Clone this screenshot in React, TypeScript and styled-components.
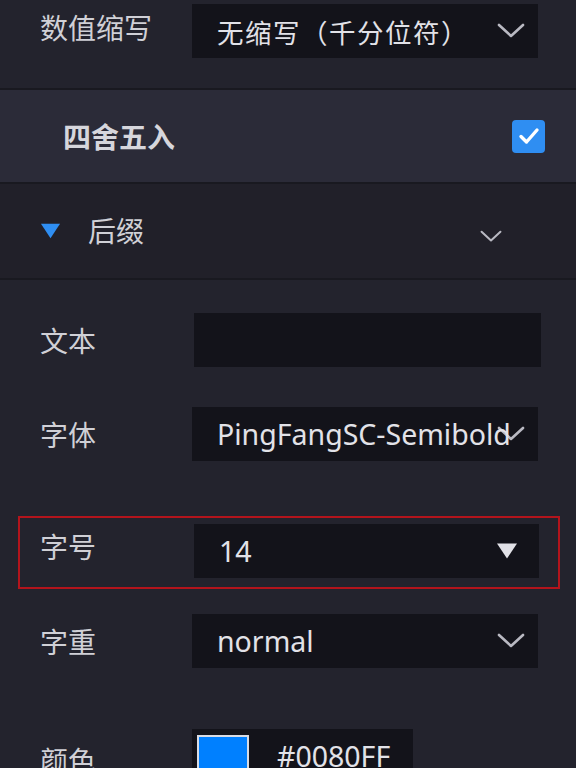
import React from "react";
import styled, { createGlobalStyle } from "styled-components";

const GlobalStyle = createGlobalStyle`
  html, body {
    margin: 0;
    padding: 0;
    background: #23232d;
  }
  body {
    font-family: "Noto Sans", "Noto Sans CJK SC", sans-serif;
  }
`;

const Panel = styled.div`
  width: 576px;
  height: 768px;
  overflow: hidden;
  background: #23232d;
  display: flex;
  flex-direction: column;
  & > * {
    flex-shrink: 0;
  }
`;

const TopSection = styled.div`
  padding: 4px 0 30px 0;
  border-bottom: 2px solid #191920;
`;

const Band = styled.div`
  height: 92px;
  background: #2b2b38;
  border-bottom: 2px solid #191920;
  display: flex;
  align-items: center;
  justify-content: space-between;
  padding: 0 31px 0 63px;
`;

const BandTitle = styled.span`
  font-family: "Noto Sans CJK SC", sans-serif;
  font-size: 28px;
  font-weight: 700;
  color: #d6d6dc;
`;

const Checkbox = styled.div`
  width: 33px;
  height: 33px;
  border-radius: 4px;
  background: #2f8ef2;
  display: flex;
  align-items: center;
  justify-content: center;
`;

const GroupHeader = styled.div`
  height: 94px;
  background: #212029;
  border-bottom: 2px solid #191920;
  display: flex;
  align-items: center;
  padding: 0 74px 0 40px;
`;

const GroupTitle = styled.span`
  font-family: "Noto Sans CJK SC", sans-serif;
  font-size: 28px;
  color: #d0d0d6;
  margin-left: 27px;
  flex: 1;
  margin-top: -2px;
`;

const HeaderArrow = styled.span`
  display: flex;
  margin-top: 10px;
`;

const Fields = styled.div`
  display: flex;
  flex-direction: column;
  padding-top: 33px;
`;

const FieldRow = styled.div<{ $top?: number; $boxed?: boolean }>`
  display: flex;
  align-items: center;
  margin-top: ${(p) => p.$top ?? 0}px;
  ${(p) =>
    p.$boxed
      ? `
    margin-left: 18px;
    margin-right: 16px;
    border: 2px solid #b3141c;
    padding: 6px 0 9px 20px;
  `
      : `padding-left: 40px;`}
`;

const Label = styled.span<{ $w?: number; $dy?: number }>`
  width: ${(p) => p.$w ?? 152}px;
  flex-shrink: 0;
  font-family: "Noto Sans CJK SC", sans-serif;
  font-size: 28px;
  color: #d0d0d6;
  position: relative;
  top: ${(p) => p.$dy ?? 0}px;
`;

const Select = styled.div<{ $w?: number }>`
  position: relative;
  width: ${(p) => p.$w ?? 346}px;
  height: 54px;
  background: #13131a;
  display: flex;
  align-items: center;
  padding-left: 25px;
  box-sizing: border-box;
`;

const Value = styled.span<{ $cjk?: boolean }>`
  position: relative;
  z-index: 1;
  font-family: ${(p) =>
    p.$cjk ? `"Noto Sans CJK SC", sans-serif` : `"Noto Sans", "Noto Sans CJK SC", sans-serif`};
  font-size: ${(p) => (p.$cjk ? 26.5 : 28.5)}px;
  letter-spacing: ${(p) => (p.$cjk ? 1.5 : 0)}px;
  color: #e2e2e8;
  white-space: nowrap;
`;

const ArrowSlot = styled.span<{ $right: number }>`
  position: absolute;
  right: ${(p) => p.$right}px;
  top: 50%;
  transform: translateY(-50%);
  display: flex;
`;

const ColorBox = styled.div`
  width: 221px;
  height: 54px;
  background: #13131a;
  display: flex;
  align-items: center;
  padding-left: 5px;
  box-sizing: border-box;
  gap: 28px;
`;

const Swatch = styled.div<{ $color: string }>`
  width: 52px;
  height: 42px;
  box-sizing: border-box;
  border: 2px solid #d8dce4;
  background: ${(p) => p.$color};
`;

const Chevron = ({ w = 28, h = 16 }: { w?: number; h?: number }) => (
  <svg width={w} height={h} viewBox="0 0 28 16" fill="none">
    <path d="M2 2 L14 13 L26 2" stroke="#b9b9c2" strokeWidth="2.6" strokeLinecap="round" strokeLinejoin="round" />
  </svg>
);

const Caret = ({ color = "#e2e2e8", w = 22, h = 17 }: { color?: string; w?: number; h?: number }) => (
  <svg width={w} height={h} viewBox="0 0 22 17">
    <path d="M1 1 H21 L11 16 Z" fill={color} />
  </svg>
);

const Check = () => (
  <svg width="22" height="18" viewBox="0 0 22 18" fill="none">
    <path d="M3 9.5 L8.5 15 L19 3" stroke="#ffffff" strokeWidth="3.4" strokeLinecap="round" strokeLinejoin="round" />
  </svg>
);

export default function App() {
  return (
    <>
      <GlobalStyle />
      <Panel>
        <TopSection>
          <FieldRow>
            <Label $dy={-4}>数值缩写</Label>
            <Select>
              <Value $cjk>无缩写（千分位符）</Value>
              <ArrowSlot $right={13}>
                <Chevron />
              </ArrowSlot>
            </Select>
          </FieldRow>
        </TopSection>

        <Band>
          <BandTitle>四舍五入</BandTitle>
          <Checkbox>
            <Check />
          </Checkbox>
        </Band>

        <GroupHeader>
          <Caret color="#2f8ef2" w={21} h={22} />
          <GroupTitle>后缀</GroupTitle>
          <HeaderArrow>
            <Chevron w={22} h={13} />
          </HeaderArrow>
        </GroupHeader>

        <Fields>
          <FieldRow>
            <Label $w={154}>文本</Label>
            <Select $w={347} />
          </FieldRow>
          <FieldRow $top={40}>
            <Label>字体</Label>
            <Select>
              <Value>PingFangSC-Semibold</Value>
              <ArrowSlot $right={13}>
                <Chevron />
              </ArrowSlot>
            </Select>
          </FieldRow>
          <FieldRow $top={55} $boxed>
            <Label $w={154} $dy={-5}>字号</Label>
            <Select $w={345}>
              <Value>14</Value>
              <ArrowSlot $right={21}>
                <Caret />
              </ArrowSlot>
            </Select>
          </FieldRow>
          <FieldRow $top={25}>
            <Label>字重</Label>
            <Select>
              <Value>normal</Value>
              <ArrowSlot $right={13}>
                <Chevron />
              </ArrowSlot>
            </Select>
          </FieldRow>
          <FieldRow $top={61}>
            <Label $dy={4}>颜色</Label>
            <ColorBox>
              <Swatch $color="#0080ff" />
              <Value>#0080FF</Value>
            </ColorBox>
          </FieldRow>
        </Fields>
      </Panel>
    </>
  );
}
